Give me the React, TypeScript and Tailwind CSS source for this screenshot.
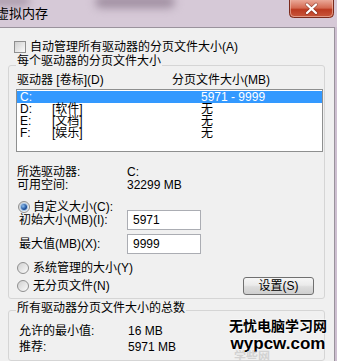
import React from 'react';

const font = { fontFamily: '"Liberation Sans", "Noto Sans CJK SC", sans-serif' };

const Radio = ({ checked }: { checked?: boolean }) => (
  <span className="w-[12px] h-[12px] rounded-full border border-[#8f8f8f] bg-[linear-gradient(135deg,#d0d0d0,#fbfbfb)] flex items-center justify-center shrink-0">
    {checked && <span className="w-[6px] h-[6px] rounded-full bg-[radial-gradient(circle_at_35%_35%,#8fc0ef,#1a4f9c_60%,#0f3573)] ring-1 ring-[#a6c6e8]" />}
  </span>
);

const CloseButton = () => (
  <svg width="45" height="18" viewBox="0 0 45 18" className="shrink-0 mr-[3px]">
    <defs>
      <linearGradient id="cb" x1="0" y1="0" x2="0" y2="1">
        <stop offset="0" stopColor="#eaa898" />
        <stop offset="0.45" stopColor="#d46a52" />
        <stop offset="0.55" stopColor="#bb3a20" />
        <stop offset="1" stopColor="#c9583c" />
      </linearGradient>
    </defs>
    <path d="M0.5 0 V13.5 Q0.5 17.5 4.5 17.5 H40.5 Q44.5 17.5 44.5 13.5 V0" fill="url(#cb)" stroke="#7a2a1c" />
    <path d="M1.5 0 V13 Q1.5 16.5 5 16.5 H40 Q43.5 16.5 43.5 13 V0" fill="none" stroke="#f2c4b6" strokeOpacity="0.6" />
    <path d="M18 4.5 L27 13 M27 4.5 L18 13" stroke="#5a1a10" strokeWidth="3.6" strokeLinecap="round" strokeOpacity="0.5" />
    <path d="M18 4.5 L27 13 M27 4.5 L18 13" stroke="#ffffff" strokeWidth="2.4" strokeLinecap="round" />
  </svg>
);

const drives = [
  { letter: 'C:', label: '', size: '5971 - 9999', selected: true },
  { letter: 'D:', label: '[软件]', size: '无' },
  { letter: 'E:', label: '[文档]', size: '无' },
  { letter: 'F:', label: '[娱乐]', size: '无' },
];

export default function App() {
  return (
    <div className="w-[337px] h-[361px] overflow-hidden relative bg-[#cdbfd0] text-[12px] text-black" style={font}>
      {/* title bar */}
      <div className="h-[27px] relative flex items-start justify-between bg-[#d6c9d7]">
        <div className="absolute left-[95px] -top-[4px] w-[80px] h-[12px] rounded-full bg-[#a08fa1] blur-[4px]" />
        <div className="absolute -left-[10px] -top-[4px] w-[40px] h-[10px] rounded-full bg-[#aa9aab] blur-[4px]" />
        <span className="relative self-center -ml-[4px] text-[13px] leading-[14px] mt-[1px]">虚拟内存</span>
        <CloseButton />
      </div>

      {/* dialog body */}
      <div className="w-[335px] h-[334px] bg-[#f0f0f0] border-t border-r border-[#9a929c] flex flex-col">
        <div className="mt-[12px] h-[14px] flex items-center pl-[14px] gap-[4px]">
          <span className="w-[12px] h-[12px] border border-[#8f8f8f] bg-[linear-gradient(135deg,#d0d0d0,#fafafa)] shrink-0" />
          <span className="leading-[14px]">自动管理所有驱动器的分页文件大小(A)</span>
        </div>

        {/* group 1 */}
        <div className="relative mt-[11px] mx-[8px] w-[317px] border border-[#d5d5d5] rounded-[3px] pb-[3px]">
          <span className="absolute left-[7px] -top-[12px] leading-[14px] bg-[#f0f0f0] px-[1px]">每个驱动器的分页文件大小</span>

          <div className="mt-[7px] h-[14px] flex items-center pl-[8px] leading-[14px]">
            <span className="w-[155px] shrink-0">驱动器 [卷标](D)</span>
            <span>分页文件大小(MB)</span>
          </div>

          <div className="mt-[2px] ml-[7px] w-[307px] h-[63px] border border-[#8e8f8f] bg-white pt-[1px]">
            {drives.map((d) => (
              <div
                key={d.letter}
                className={`h-[12px] flex items-center pl-[3px] leading-[12px] ${d.selected ? 'bg-[#3399ff] text-white' : ''}`}
              >
                <span className="w-[32px] shrink-0">{d.letter}</span>
                <span className="w-[149px] shrink-0">{d.label}</span>
                <span>{d.size}</span>
              </div>
            ))}
          </div>

          <div className="mt-[14px] pl-[8px] leading-[13px]">
            <div className="flex h-[13px] items-center">
              <span className="w-[110px] shrink-0">所选驱动器:</span>
              <span>C:</span>
            </div>
            <div className="flex h-[13px] items-center">
              <span className="w-[110px] shrink-0">可用空间:</span>
              <span>32299 MB</span>
            </div>
          </div>

          <div className="mt-[8px] h-[14px] flex items-center pl-[9px] gap-[3px]">
            <Radio checked />
            <span className="leading-[14px]">自定义大小(C):</span>
          </div>

          <div className="-mt-[4px] h-[20px] flex items-center pl-[10px]">
            <span className="w-[108px] shrink-0 leading-[14px]">初始大小(MB)(I):</span>
            <span className="w-[74px] h-[20px] border border-[#abadb3] bg-white flex items-center pl-[5px] leading-[14px]">5971</span>
          </div>

          <div className="mt-[4px] h-[20px] flex items-center pl-[10px]">
            <span className="w-[108px] shrink-0 leading-[14px]">最大值(MB)(X):</span>
            <span className="w-[74px] h-[20px] border border-[#abadb3] bg-white flex items-center pl-[5px] leading-[14px]">9999</span>
          </div>

          <div className="mt-[7px] h-[14px] flex items-center pl-[8px] gap-[4px]">
            <Radio />
            <span className="leading-[14px]">系统管理的大小(Y)</span>
          </div>

          <div className="mt-[2px] h-[18px] flex items-center pl-[8px] pr-[10px]">
            <Radio />
            <span className="ml-[4px] leading-[14px]">无分页文件(N)</span>
            <button className="ml-auto w-[71px] h-[18px] rounded-[3px] border border-[#707070] bg-[linear-gradient(180deg,#f6f6f6_0%,#eaeaea_45%,#dcdcdc_55%,#cfcfcf_100%)] text-[12px] leading-[14px] flex items-center justify-center">
              设置(S)
            </button>
          </div>
        </div>

        {/* group 2 */}
        <div className="relative mt-[11px] mx-[8px] w-[317px] h-[80px] border border-[#d5d5d5] rounded-[3px]">
          <span className="absolute left-[7px] -top-[10px] leading-[14px] bg-[#f0f0f0] px-[1px]">所有驱动器分页文件大小的总数</span>
          <div className="mt-[12px] pl-[10px] leading-[16px]">
            <div className="flex h-[16px] items-center">
              <span className="w-[109px] shrink-0">允许的最小值:</span>
              <span>16 MB</span>
            </div>
            <div className="flex h-[16px] items-center">
              <span className="w-[109px] shrink-0">推荐:</span>
              <span>5971 MB</span>
            </div>
          </div>
        </div>
      </div>

      {/* watermark */}
      <div className="absolute left-[226px] top-[316px] w-[104px] flex flex-col items-center">
        <span className="text-[14px] leading-[20px] font-bold" style={{ textShadow: '0 0 2px #fff, 0 0 2px #fff' }}>无忧电脑学习网</span>
        <span className="text-[17px] leading-[15px] font-bold" style={{ textShadow: '0 0 2px #fff, 0 0 2px #fff' }}>wypcw.com</span>
        <span className="text-[12px] leading-[12px] font-bold text-[#d2d2d2] ml-[8px]">学些网 xuehb.com</span>
      </div>
    </div>
  );
}
